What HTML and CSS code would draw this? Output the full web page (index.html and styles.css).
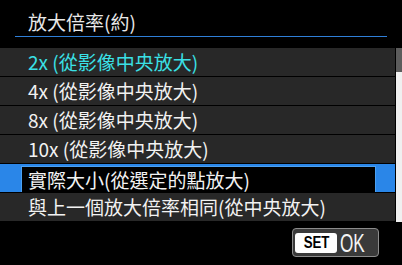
FILE: index.html
```html
<!DOCTYPE html>
<html>
<head>
<meta charset="utf-8">
<link rel="stylesheet" href="styles.css">
</head>
<body>
<div class="screen">
  <div class="header"><span class="title">放大倍率(約)</span></div>
  <div class="listwrap">
    <div class="list">
      <div class="row current"><span class="txt">2x (從影像中央放大)</span></div>
      <div class="row"><span class="txt">4x (從影像中央放大)</span></div>
      <div class="row"><span class="txt">8x (從影像中央放大)</span></div>
      <div class="row"><span class="txt">10x (從影像中央放大)</span></div>
      <div class="row selected"><div class="selbox"><span class="txt">實際大小(從選定的點放大)</span></div></div>
      <div class="row"><span class="txt">與上一個放大倍率相同(從中央放大)</span></div>
    </div>
    <div class="scrollbar"><div class="thumb"></div></div>
  </div>
  <div class="footer">
    <div class="setok">
      <span class="setpill"><span class="settext">SET</span></span>
      <span class="ok">OK</span>
    </div>
  </div>
</div>
</body>
</html>
```
FILE: styles.css
```css
html, body {
  margin: 0;
  padding: 0;
  background: #000;
}
.screen {
  width: 402px;
  height: 265px;
  background: #000;
  font-family: "Noto Sans CJK TC", "Noto Sans", sans-serif;
  overflow: hidden;
}
.header {
  margin: 0 15px 0 15px;
  height: 36px;
  box-sizing: content-box;
  border-bottom: 1px solid #2f7fd8;
  padding-left: 13px;
  display: flex;
  align-items: flex-start;
}
.title {
  color: #e8e8e8;
  font-size: 19px;
  line-height: 28px;
  padding-top: 8px;
}
.listwrap {
  margin-top: 11px;
  display: flex;
  gap: 1px;
}
.list {
  width: 395px;
  display: flex;
  flex-direction: column;
  gap: 1px;
}
.row {
  height: 28px;
  background: #282828;
  display: flex;
  align-items: center;
  padding-left: 28px;
  box-sizing: border-box;
}
.txt {
  font-size: 19px;
  line-height: 28px;
  color: #f2f2f2;
  white-space: nowrap;
}
.current .txt {
  color: #3ae0e6;
}
.row.selected {
  background: #2a86e8;
  padding: 2px 19px 0 21px;
  align-items: stretch;
}
.selbox {
  flex: 1;
  background: #000;
  border: 1px solid #4aa0f2;
  border-bottom: none;
  display: flex;
  align-items: center;
  padding-left: 6px;
}
.selbox .txt {
  line-height: 26px;
}
.scrollbar {
  width: 6px;
  height: 174px;
  background: #f0f0f0;
  display: flex;
  flex-direction: column;
}
.thumb {
  height: 24px;
  background: #5c5c5c;
}
.footer {
  display: flex;
  justify-content: flex-end;
  padding-right: 23px;
  margin-top: 6px;
}
.setok {
  width: 87px;
  height: 29px;
  box-sizing: border-box;
  border: 1px solid #8c8c8c;
  border-radius: 4px;
  background: #3a3a3a;
  display: flex;
  align-items: center;
  padding-left: 2px;
}
.setpill {
  width: 52px;
  height: 20px;
  background: #fff;
  border-radius: 3px;
  display: flex;
  align-items: center;
  justify-content: center;
}
.settext {
  font-family: "Liberation Sans", sans-serif;
  font-weight: bold;
  font-size: 17px;
  color: #000;
  display: inline-block;
  transform: scaleX(0.78);
  line-height: 20px;
}
.ok {
  font-family: "Liberation Sans", sans-serif;
  font-size: 26px;
  line-height: 26px;
  color: #f4f4f4;
  display: inline-block;
  transform: scaleX(0.66);
  transform-origin: left center;
  margin-left: 3px;
}
```
